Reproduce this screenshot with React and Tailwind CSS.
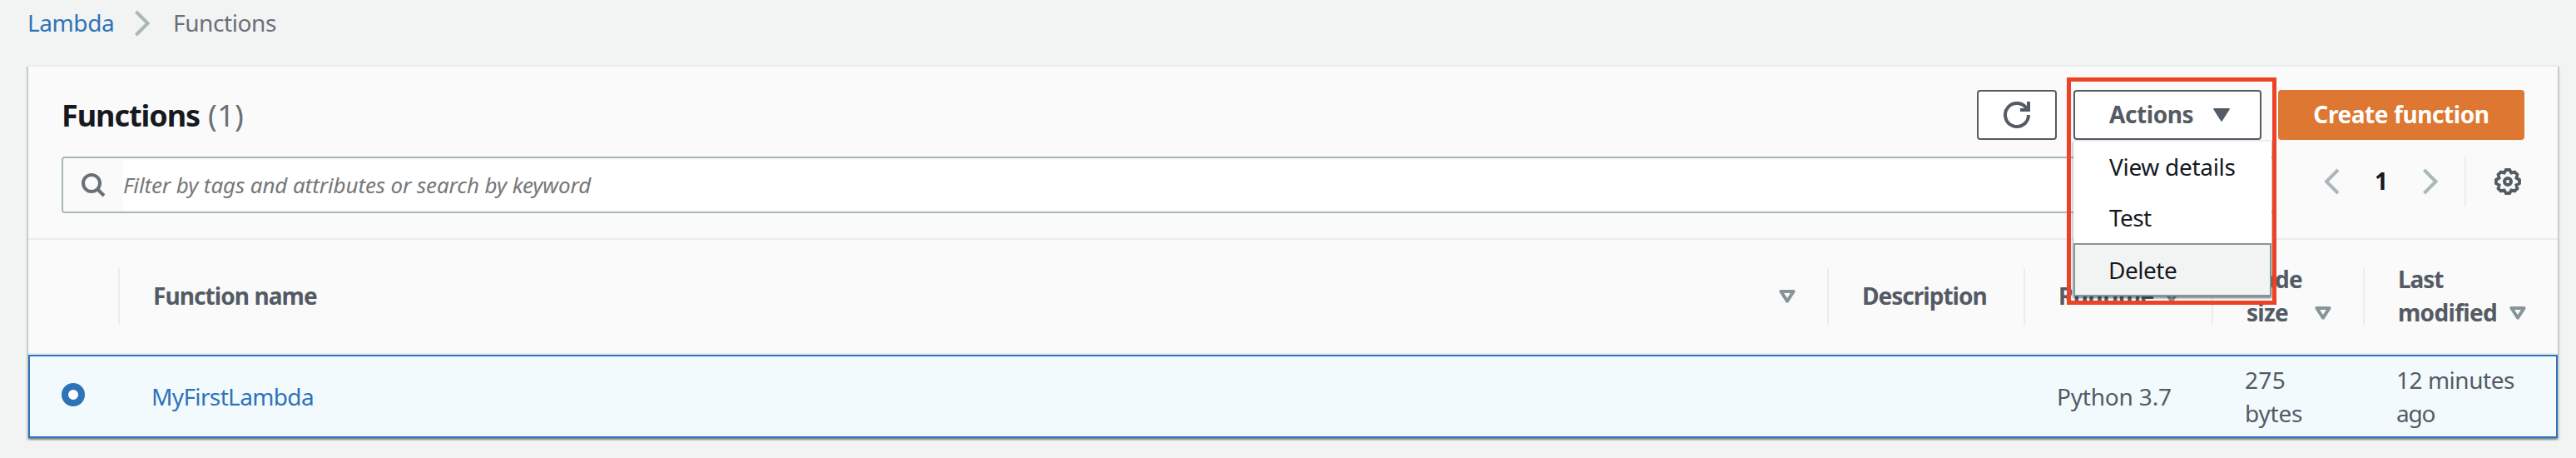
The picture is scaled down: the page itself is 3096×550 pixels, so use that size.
function Chevron({ className, d, viewBox }) {
  return (
    <svg className={className} viewBox={viewBox} fill="none" stroke="#aab7b8" strokeWidth="4">
      <path d={d} />
    </svg>
  );
}

function SearchIcon() {
  return (
    <svg className="h-8 w-8 shrink-0" viewBox="0 0 32 32" fill="none" stroke="#687078" strokeWidth="4">
      <circle cx="14" cy="14" r="10" />
      <path d="M21 21l8 8" />
    </svg>
  );
}

function RefreshIcon() {
  return (
    <svg className="h-8 w-8" viewBox="0 0 32 32" fill="none" stroke="#545b64" strokeWidth="4">
      <path d="M30 16A14 14 0 1 1 28.3 9.3" />
      <path d="M30 0V10H20" />
    </svg>
  );
}

const TEETH = [0, 45, 90, 135, 180, 225, 270, 315];

function GearIcon() {
  const points = TEETH.flatMap((deg) => {
    const a = (deg * Math.PI) / 180;
    const v = ((deg + 22.5) * Math.PI) / 180;
    const at = (x, y) => [16 + x * Math.cos(a) - y * Math.sin(a), 16 + x * Math.sin(a) + y * Math.cos(a)].join(",");
    return [at(-2.2, -14), at(2.2, -14), [16 + 11.2 * Math.sin(v), 16 - 11.2 * Math.cos(v)].join(",")];
  }).join(" ");
  return (
    <svg className="h-8 w-8" viewBox="0 0 32 32" fill="none" stroke="#545b64" strokeWidth="3.8">
      <polygon points={points} />
      <circle cx="16" cy="16" r="4" strokeWidth="4" />
    </svg>
  );
}

function SortIcon() {
  return (
    <svg className="h-4 w-5 shrink-0" viewBox="0 0 20 16" fill="none" stroke="#879596" strokeWidth="4" strokeLinejoin="round">
      <path d="M2.4 2H17.6L10 13.6Z" />
    </svg>
  );
}

function HeadCell({ children, last }) {
  return (
    <div className={"flex h-[68px] items-center pl-10 " + (last ? "" : "border-r-2 border-[#eaeded]")}>
      {children}
    </div>
  );
}

const COLS = "grid grid-cols-[110px_2054px_236px_226px_182px_232px] items-center";

export default function App() {
  return (
    <div className="h-[550px] w-[3096px] overflow-hidden bg-[#f2f3f3] font-['Noto_Sans',sans-serif] text-[28px] leading-10 whitespace-nowrap text-[#545b64]">
      <nav className="flex h-[54px] items-center pt-0.5 pl-8">
        <a className="-mt-0.5 w-[129px] pl-px tracking-[-0.4px] text-[#2e73b8]">Lambda</a>
        <Chevron className="h-8 w-5" viewBox="0 0 20 32" d="M2.5 2L16.5 16L2.5 30" />
        <span className="-mt-0.5 ml-[27px] tracking-[-0.39px] text-[#687078]">Functions</span>
      </nav>

      <main className="mt-6 ml-[34px] w-[3040px] border-t-2 border-[#eaeded] bg-[#fafafa] shadow-[0_2px_2px_0_rgba(0,28,36,0.3),2px_2px_2px_0_rgba(0,28,36,0.15),-2px_2px_2px_0_rgba(0,28,36,0.15)]">
        <header className="border-b-2 border-[#eaeded] px-10 pt-7 pb-[30px]">
          <div className="flex h-[60px] items-center">
            <h1 className="mr-auto flex pt-0.5 text-[36px] font-bold text-[#16191f]">
              <span className="tracking-[-1.05px]">Functions</span>
              <span className="ml-2.5 font-normal tracking-[0.3px] text-[#687078]">(1)</span>
            </h1>
            <button className="flex h-[60px] w-24 items-center justify-center rounded border-2 border-[#545b64] bg-white">
              <RefreshIcon />
            </button>
            <div className="relative ml-5">
              <button className="flex h-[60px] w-[226px] items-center rounded border-2 border-[#545b64] bg-white pl-[41px] font-bold">
                <span className="-mt-0.5 w-[125px] text-left tracking-[-0.42px]">Actions</span>
                <svg className="h-4 w-5" viewBox="0 0 20 16" fill="#545b64" stroke="#545b64" strokeWidth="2" strokeLinejoin="round">
                  <path d="M1.2 1H18.8L10 14.6Z" />
                </svg>
              </button>
              <div className="absolute top-[60px] left-0 z-10 flex h-[188px] w-[238px] flex-col border-t-2 border-[#eaeded] bg-white text-[#16191f] shadow-[0_2px_2px_0_rgba(0,28,36,0.3),2px_2px_2px_0_rgba(0,28,36,0.15),-2px_2px_2px_0_rgba(0,28,36,0.15)]">
                <div className="flex h-[60px] items-center pl-[43px] tracking-[-0.3px]">View details</div>
                <div className="flex h-[62px] items-center pl-[43px] tracking-[-0.6px]">Test</div>
                <div className="flex h-16 items-center border-2 border-[#879596] bg-[#f2f3f3] pl-10 tracking-[-0.47px]">Delete</div>
              </div>
              <div className="absolute -top-[15px] -left-2 z-20 h-[273px] w-[252px] border-5 border-[#ee4226]" />
            </div>
            <button className="ml-5 flex h-[60px] w-[296px] items-center justify-center rounded bg-[#dd7731] font-bold text-white">
              <span className="-mt-0.5 tracking-[-0.41px]">Create function</span>
            </button>
          </div>

          <div className="mt-5 flex h-[68px] items-center">
            <div className="flex h-[68px] w-[2662px] items-stretch rounded border-2 border-[#aab7b8]">
              <div className="flex w-[72px] items-center pl-5">
                <SearchIcon />
              </div>
              <div className="my-0.5 flex grow items-center bg-white text-[26px] tracking-[-0.11px] text-[#777] italic">
                Filter by tags and attributes or search by keyword
              </div>
            </div>
            <div className="flex h-[60px] items-center self-start">
              <Chevron className="ml-[57px] h-8 w-5" viewBox="0 0 20 32" d="M17 2L3 16L17 30" />
              <span className="-mt-0.5 ml-[41px] w-4 font-bold text-[#16191f]">1</span>
              <Chevron className="ml-[41px] h-8 w-5" viewBox="0 0 20 32" d="M2.5 2L16.5 16L2.5 30" />
              <div className="ml-[31px] h-[60px] w-0.5 bg-[#eaeded]" />
              <div className="ml-[34px]">
                <GearIcon />
              </div>
            </div>
          </div>
        </header>

        <div className={COLS + " h-[138px] border-b-2 border-[#eaeded] font-bold"}>
          <HeadCell />
          <HeadCell>
            <span className="-mt-0.5 tracking-[-0.92px]">Function name</span>
            <span className="mr-[38px] ml-auto">
              <SortIcon />
            </span>
          </HeadCell>
          <HeadCell>
            <span className="-mt-0.5 tracking-[-0.98px]">Description</span>
          </HeadCell>
          <HeadCell>
            <span className="-mt-0.5 w-[126px] tracking-[-0.7px]">Runtime</span>
            <SortIcon />
          </HeadCell>
          <HeadCell>
            <span className="-mt-0.5 w-[82px] tracking-[-0.74px]">
              Code
              <br />
              size
            </span>
            <span className="mt-10">
              <SortIcon />
            </span>
          </HeadCell>
          <HeadCell last>
            <span className="-mt-0.5 w-[134px]">
              <span className="tracking-[-1.1px]">Last</span>
              <br />
              <span className="tracking-[-0.68px]">modified</span>
            </span>
            <span className="mt-10">
              <SortIcon />
            </span>
          </HeadCell>
        </div>

        <div className={COLS + " h-[100px] border-2 border-[#2e73b8] bg-[#f2fafe]"}>
          <div className="-mt-1 pl-[38px]">
            <div className="h-7 w-7 rounded-full border-8 border-[#2e73b8] bg-white" />
          </div>
          <a className="pl-9 tracking-[-0.63px] text-[#2e73b8]">MyFirstLambda</a>
          <div />
          <span className="pl-9 tracking-[-0.19px]">Python 3.7</span>
          <span className="pl-9">
            <span className="tracking-[0.3px]">275</span>
            <br />
            <span className="tracking-[-0.2px]">bytes</span>
          </span>
          <span className="pl-9">
            <span className="tracking-[-0.47px]">12 minutes</span>
            <br />
            <span className="tracking-[-1.2px]">ago</span>
          </span>
        </div>
      </main>
    </div>
  );
}
